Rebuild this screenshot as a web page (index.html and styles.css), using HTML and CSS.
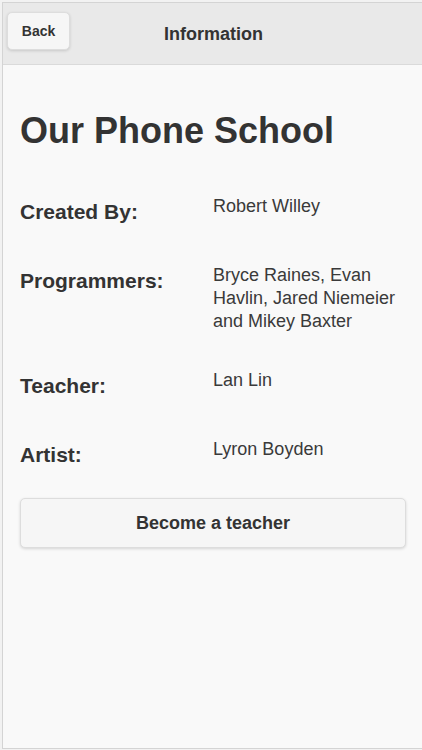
FILE: index.html
```html
<!DOCTYPE html>
<html lang="en">
<head>
<meta charset="utf-8">
<title>Information</title>
<link rel="stylesheet" href="styles.css">
</head>
<body>
<div class="page">
  <header class="bar">
    <button class="back">Back</button>
    <h2 class="bar-title">Information</h2>
    <span></span>
  </header>
  <main class="content">
    <h1 class="title">Our Phone School</h1>
    <div class="rows">
      <div class="row"><div class="label">Created By:</div><div class="value">Robert Willey</div></div>
      <div class="row"><div class="label">Programmers:</div><div class="value">Bryce Raines, Evan Havlin, Jared Niemeier and Mikey Baxter</div></div>
      <div class="row"><div class="label">Teacher:</div><div class="value">Lan Lin</div></div>
      <div class="row"><div class="label">Artist:</div><div class="value">Lyron Boyden</div></div>
    </div>
    <button class="wide">Become a teacher</button>
  </main>
</div>
</body>
</html>
```
FILE: styles.css
```css
html, body {
  margin: 0;
  padding: 0;
  background: #f2f2f2;
  overflow: hidden;
}
body {
  width: 422px;
  height: 750px;
  font-family: "Liberation Sans", Arial, sans-serif;
  color: #333;
}
.page {
  box-sizing: border-box;
  margin: 2px 0 0 2px;
  width: 422px;
  height: 747px;
  border-left: 1px solid #d4d4d4;
  border-top: 1px solid #d4d4d4;
  border-bottom: 1px solid #d4d4d4;
  background: #f9f9f9;
  display: flex;
  flex-direction: column;
}
.bar {
  box-sizing: border-box;
  height: 62px;
  background: #e9e9e9;
  border-bottom: 1px solid #dadada;
  display: grid;
  grid-template-columns: 1fr auto 1fr;
  align-items: center;
  padding-left: 4px;
  padding-right: 4px;
}
.back {
  justify-self: start;
  align-self: start;
  margin-top: 9px;
  box-sizing: border-box;
  width: 63px;
  height: 38px;
  padding: 0;
  font-family: inherit;
  font-size: 14px;
  font-weight: bold;
  color: #333;
  background: #f6f6f6;
  border: 1px solid #dddddd;
  border-radius: 5px;
  box-shadow: 0 1px 3px rgba(0,0,0,0.15);
}
.bar-title {
  margin: 0;
  font-size: 18px;
  font-weight: bold;
  line-height: 22px;
  color: #333;
}
.content {
  padding: 44px 18px 0 17px;
}
.title {
  margin: 0 0 42px;
  font-size: 36px;
  line-height: 44px;
  font-weight: bold;
  color: #333;
}
.rows {
  display: flex;
  flex-direction: column;
  gap: 36px;
}
.row {
  display: grid;
  grid-template-columns: 193px 1fr;
  align-items: start;
}
.label {
  font-size: 21px;
  font-weight: bold;
  line-height: 33px;
}
.value {
  font-size: 18px;
  line-height: 23px;
  color: #3a3a3a;
}
.wide {
  display: block;
  box-sizing: border-box;
  width: 100%;
  margin-top: 27px;
  height: 50px;
  padding: 0;
  font-family: inherit;
  font-size: 18px;
  font-weight: bold;
  color: #333;
  background: #f6f6f6;
  border: 1px solid #dddddd;
  border-radius: 5px;
  box-shadow: 0 1px 3px rgba(0,0,0,0.15);
}
```
